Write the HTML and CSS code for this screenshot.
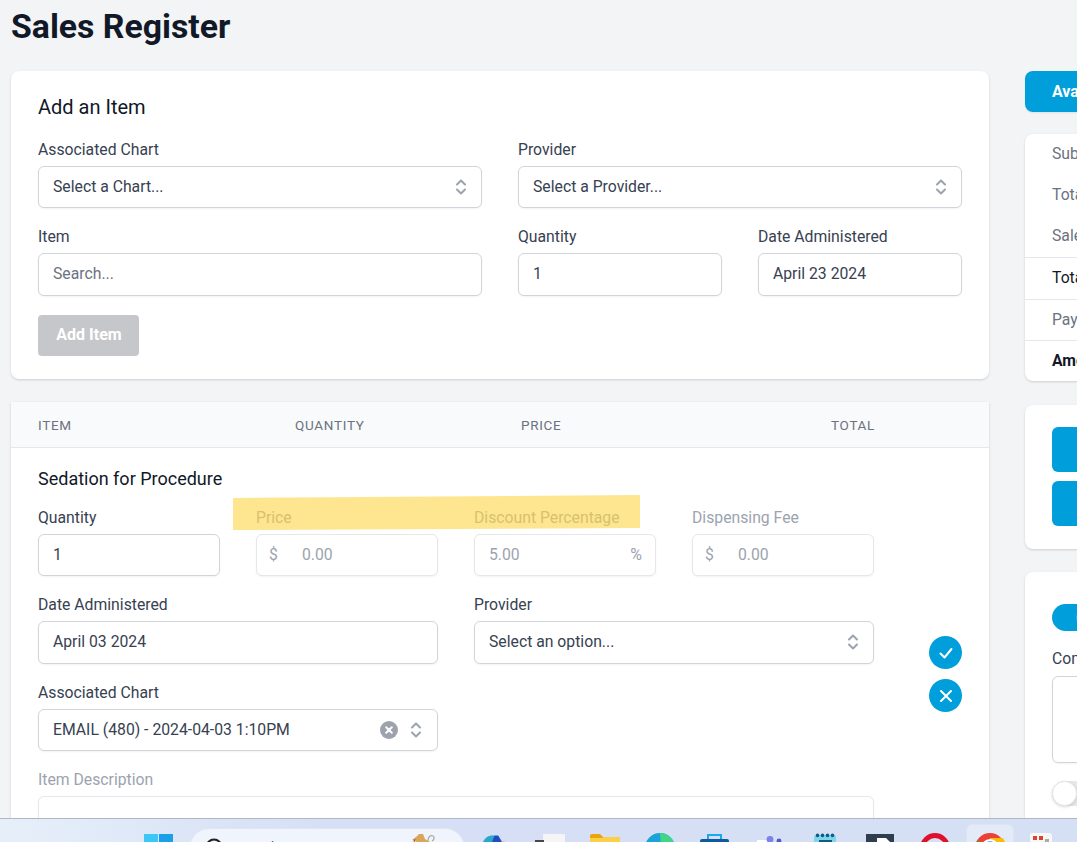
FILE: index.html
```html
<!DOCTYPE html>
<html lang="en">
<head>
<meta charset="utf-8">
<title>Sales Register</title>
<link rel="stylesheet" href="styles.css">
</head>
<body>
<div class="page">
  <h1 class="title">Sales Register</h1>
  <div class="columns">
    <main class="main">
      <section class="card add-card">
        <h2 class="heading">Add an Item</h2>
        <div class="form-grid">
          <div class="field half"><label class="label">Associated Chart</label>
            <div class="control"><span class="value">Select a Chart...</span><svg class="updown" viewBox="0 0 12 20"><path d="M2 7.5 6 3.5l4 4M2 12.5l4 4 4-4"/></svg></div></div>
          <div class="field half"><label class="label">Provider</label>
            <div class="control"><span class="value">Select a Provider...</span><svg class="updown" viewBox="0 0 12 20"><path d="M2 7.5 6 3.5l4 4M2 12.5l4 4 4-4"/></svg></div></div>
          <div class="field half"><label class="label">Item</label>
            <div class="control tall"><span class="placeholder">Search...</span></div></div>
          <div class="field"><label class="label">Quantity</label>
            <div class="control tall"><span class="value">1</span></div></div>
          <div class="field"><label class="label">Date Administered</label>
            <div class="control tall"><span class="value">April 23 2024</span></div></div>
        </div>
        <button class="add-btn">Add Item</button>
      </section>

      <section class="card table-card">
        <div class="thead">
          <span class="th th-item">ITEM</span>
          <span class="th th-qty">QUANTITY</span>
          <span class="th th-price">PRICE</span>
          <span class="th th-total">TOTAL</span>
        </div>
        <div class="edit-row">
          <div class="edit-form">
            <h3 class="subheading">Sedation for Procedure</h3>
            <div class="form-grid">
              <div class="field"><label class="label">Quantity</label>
                <div class="control"><span class="value">1</span></div></div>
              <div class="field disabled"><label class="label">Price</label>
                <div class="control addon"><span class="prefix">$</span><span class="dim">0.00</span></div></div>
              <div class="field disabled"><label class="label">Discount Percentage</label>
                <div class="control"><span class="dim">5.00</span><span class="suffix">%</span></div></div>
              <div class="field disabled"><label class="label">Dispensing Fee</label>
                <div class="control addon"><span class="prefix">$</span><span class="dim">0.00</span></div></div>
              <div class="field half"><label class="label">Date Administered</label>
                <div class="control tall"><span class="value">April 03 2024</span></div></div>
              <div class="field half"><label class="label">Provider</label>
                <div class="control tall"><span class="value">Select an option...</span><svg class="updown" viewBox="0 0 12 20"><path d="M2 7.5 6 3.5l4 4M2 12.5l4 4 4-4"/></svg></div></div>
              <div class="field half"><label class="label">Associated Chart</label>
                <div class="control"><span class="value">EMAIL (480) - 2024-04-03 1:10PM</span>
                  <svg class="clear" viewBox="0 0 18 18"><circle cx="9" cy="9" r="9"/><path d="M6.2 6.2l5.6 5.6M11.8 6.2l-5.6 5.6"/></svg>
                  <svg class="updown chart-updown" viewBox="0 0 12 20"><path d="M2 7.5 6 3.5l4 4M2 12.5l4 4 4-4"/></svg></div></div>
              <div class="field full disabled"><label class="label">Item Description</label>
                <div class="control area"></div></div>
            </div>
          </div>
          <div class="row-actions">
            <button class="round" aria-label="Save"><svg viewBox="0 0 20 20"><path d="M4.5 10.5 8.5 14.5 15.5 6"/></svg></button>
            <button class="round" aria-label="Cancel"><svg viewBox="0 0 20 20"><path d="M5 5l10 10M15 5 5 15"/></svg></button>
          </div>
        </div>
      </section>
    </main>

    <aside class="side">
      <button class="avail-btn">Available Credit</button>
      <section class="card summary">
        <div class="sum-group">
          <div class="sum-row muted">Subtotal</div>
          <div class="sum-row muted">Total Discount</div>
          <div class="sum-row muted">Sales Tax</div>
        </div>
        <div class="sum-line dark">Total</div>
        <div class="sum-line muted">Payments</div>
        <div class="sum-line strong">Amount Due</div>
      </section>
      <section class="card actions-card">
        <button class="action-btn">Take Payment</button>
        <button class="action-btn">Save Sale</button>
      </section>
      <section class="card comment-card">
        <button class="pill">Options</button>
        <label class="label comment-label">Comments</label>
        <div class="comment-box"></div>
        <div class="switch"><span class="knob"></span></div>
      </section>
    </aside>
  </div>
</div>

<div class="highlight"></div>

<footer class="taskbar">
  <svg class="tb win" viewBox="0 0 30 30"><rect x="0" y="0" width="14" height="14" fill="#3cc8f6"/><rect x="15" y="0" width="14" height="14" fill="#1c9fea"/></svg>
  <div class="searchbox">
    <svg class="tb-search" viewBox="0 0 16 16"><circle cx="8" cy="8" r="6"/></svg>
    <span class="search-text">Search</span>
    <svg class="tb-dog" viewBox="0 0 32 12"><path d="M0 6 4 3l3-3h4l2 5 5 3v4H5V8z" fill="#d8a75c"/><path d="M3 5l-1 3" stroke="#b5472f" fill="none"/><path d="M16 7c0-5 3-6 5-5s1 4-1 5M22 12c2-2 6-3 10-2" stroke="#a9a9a0" stroke-width="1.2" fill="none"/></svg>
  </div>
  <svg class="tb copilot" viewBox="0 0 30 30"><path d="M0 10C2 3 7 0 11 0h3l4 10z" fill="#2ea6c9"/><path d="M10 10 14 0h4l6 10z" fill="#1b4fc0"/><path d="M20 7h5l2 3h-7z" fill="#c065d6"/></svg>
  <svg class="tb box" viewBox="0 0 30 30"><rect x="8" y="0" width="22" height="30" fill="#f5f5f5"/><rect x="0" y="6" width="9" height="24" fill="#45474b"/></svg>
  <svg class="tb folder" viewBox="0 0 30 30"><path d="M0 2a2 2 0 0 1 2-2h8l3 3h17v27H0z" fill="#e8a60c"/><path d="M0 4h12l2-1h16v27H0z" fill="#fbcf4a"/></svg>
  <svg class="tb edge" viewBox="0 0 30 30"><circle cx="15" cy="15" r="15" fill="#1ba2d8"/><path d="M15 0a15 15 0 0 1 15 15H16z" fill="#3fd68a"/></svg>
  <svg class="tb bag" viewBox="0 0 30 30"><path d="M8 6V1h13v5" fill="none" stroke="#19aaec" stroke-width="2"/><rect y="5" width="29" height="25" rx="2" fill="#0f5a9e"/></svg>
  <svg class="tb teams" viewBox="0 0 30 30"><rect x="0" y="4" width="13" height="26" fill="#fff"/><circle cx="13" cy="3.4" r="3.4" fill="#7b83eb"/><circle cx="22" cy="5" r="2.4" fill="#5059c9"/></svg>
  <svg class="tb cal" viewBox="0 0 22 30"><rect y="2" width="22" height="28" rx="2" fill="#80d4ee"/><g fill="#0f5d80"><circle cx="3.5" cy="2.4" r="1.8"/><circle cx="8.5" cy="2.4" r="1.8"/><circle cx="13.5" cy="2.4" r="1.8"/><circle cx="18.5" cy="2.4" r="1.8"/><rect x="5" y="7" width="13" height="23"/></g></svg>
  <svg class="tb dark-app" viewBox="0 0 28 30"><rect width="28" height="30" fill="#2f3e4e"/><path d="M11 4h9l4 4v22H11z" fill="#fff"/></svg>
  <svg class="tb opera" viewBox="0 0 30 30"><circle cx="15" cy="15" r="12.5" fill="none" stroke="#e0102c" stroke-width="5"/></svg>
  <div class="chrome-tile">
    <svg class="chrome" viewBox="0 0 30 30"><circle cx="15" cy="15" r="15" fill="#ea4335"/><path d="M0 15A15 15 0 0 0 12 29.700L15 15 2 7.500z" fill="#34a853"/><path d="M15 5h12.500A15 15 0 0 1 15 30z" fill="#fbbc05"/><circle cx="15" cy="15" r="9" fill="#fff"/><circle cx="15" cy="15" r="6.800" fill="#4285f4"/></svg>
  </div>
  <svg class="tb sheet" viewBox="0 0 22 30"><rect width="22" height="30" rx="3" fill="#f7f7f7"/><g fill="#d9452b"><rect x="3" y="3" width="4" height="4"/><rect x="9" y="3" width="4" height="4"/><rect x="3" y="9" width="4" height="4"/></g><rect x="15" y="6" width="4" height="5" fill="#aaa"/></svg>
</footer>
</body>
</html>
```

FILE: styles.css
```css
* { box-sizing: border-box; }
html, body { margin: 0; height: 100%; overflow: hidden; }
body {
  background: #f3f4f6;
  font-family: Roboto, "Liberation Sans", sans-serif;
  font-size: 15.75px;
  color: #374151;
}
.page { padding-left: 11px; width: 1400px; height: 842px; overflow: hidden; }
.title {
  margin: 0;
  height: 71px;
  padding-top: 8px;
  font-size: 33.8px;
  line-height: 38px;
  font-weight: 700;
  color: #111827;
}
.columns { display: flex; gap: 36px; align-items: flex-start; }
.main { width: 978px; flex: none; display: flex; flex-direction: column; gap: 23px; }
.side { width: 340px; flex: none; display: flex; flex-direction: column; }
.card {
  background: #fff;
  border-radius: 8px;
  box-shadow: 0 1px 3px rgba(0,0,0,.1), 0 1px 2px rgba(0,0,0,.06);
}
.add-card { padding: 27px 27px 24px; height: 308px; }
.heading { margin: 0 0 25px; font-size: 20px; line-height: 18px; font-weight: 400; color: #111827; }
.form-grid { display: grid; grid-template-columns: repeat(4, 1fr); column-gap: 36px; row-gap: 20px; }
.field { min-width: 0; }
.half { grid-column: span 2; }
.full { grid-column: span 4; }
.label { display: block; height: 25px; line-height: 18px; font-size: 15.75px; color: #374151; }
.control {
  height: 42px;
  display: flex;
  align-items: center;
  padding: 0 14px;
  background: #fff;
  border: 1px solid #d1d5db;
  border-radius: 6px;
  box-shadow: 0 1px 2px rgba(0,0,0,.05);
  line-height: 20px;
  color: #374151;
}
.tall { height: 43px; padding-bottom: 2px; }
.addon { padding-left: 12px; }
.value { flex: 1; white-space: nowrap; color: #374151; }
.placeholder { color: #6b7280; }
.updown { width: 12px; height: 20px; flex: none; }
.updown path { fill: none; stroke: #9ca3af; stroke-width: 2; stroke-linecap: round; stroke-linejoin: round; }
.clear { width: 18px; height: 18px; flex: none; margin-right: 10px; }
.clear circle { fill: #9ca3af; }
.clear path { stroke: #fff; stroke-width: 2; stroke-linecap: round; }
.chart-updown { margin-left: 2px; margin-right: 1px; }
.add-btn {
  display: block;
  margin-top: 19px;
  width: 101px;
  height: 41px;
  border: 0;
  border-radius: 4px;
  background: #c6c7ca;
  color: #fff;
  font: 700 16px Roboto, sans-serif;
  padding: 0 0 2px 1px;
}
.table-card { border-radius: 0; height: 600px; }
.thead { height: 46px; background: #f9fafb; border-bottom: 1px solid #e5e7eb; display: grid; grid-template-columns: 257px 226px 310px 1fr; align-items: center; padding-left: 27px; }
.th { font-size: 13.5px; letter-spacing: .7px; color: #6b7280; line-height: 46px; }
.edit-row { display: flex; padding: 22px 27px 0; }
.edit-form { width: 836px; flex: none; }
.subheading { margin: 0 0 21px; font-size: 18px; line-height: 18px; font-weight: 400; color: #111827; }
.disabled .label { color: #9ca3af; }
.disabled .control { border-color: #e5e7eb; }
.prefix { width: 33px; color: #9ca3af; flex: none; }
.dim { flex: 1; color: #9ca3af; }
.suffix { color: #9ca3af; font-size: 16px; margin-right: -1px; }
.area { height: 100px; }
.row-actions { margin-left: 55px; padding-top: 166px; display: flex; flex-direction: column; gap: 10px; }
.round {
  width: 33px;
  height: 33px;
  padding: 0;
  border: 0;
  border-radius: 50%;
  background: #009fdb;
  display: flex;
  align-items: center;
  justify-content: center;
}
.round svg { width: 20px; height: 20px; }
.round path { fill: none; stroke: #fff; stroke-width: 2; stroke-linecap: round; stroke-linejoin: round; }
.avail-btn {
  height: 41px;
  border: 0;
  border-radius: 8px;
  background: #009fdb;
  color: #fff;
  font: 700 16px Roboto, sans-serif;
  text-align: left;
  padding: 0 0 0 27px;
  margin-bottom: 22px;
  box-shadow: 0 1px 2px rgba(0,0,0,.08);
}
.summary { height: 247px; margin-bottom: 24px; }
.sum-group { height: 123px; padding-top: 9px; }
.sum-row { height: 41px; line-height: 22px; padding-left: 27px; }
.sum-line { height: 41.5px; line-height: 39px; padding-left: 27px; border-top: 1px solid #e5e7eb; }
.muted { color: #6b7280; }
.dark { color: #111827; }
.strong { color: #111827; font-weight: 700; }
.actions-card { height: 144px; padding: 22px 27px; display: flex; flex-direction: column; gap: 9px; margin-bottom: 23px; }
.action-btn { height: 45px; border: 0; border-radius: 6px; background: #009fdb; color: #fff; font: 700 16px Roboto, sans-serif; }
.comment-card { height: 300px; padding: 32px 27px 0; }
.pill { display: block; width: 120px; height: 27px; border: 0; border-radius: 14px; background: #009fdb; color: #fff; font: 400 14px Roboto, sans-serif; text-align: left; padding: 0 0 0 24px; }
.comment-label { margin-top: 19px; height: 26px; }
.comment-box { height: 87px; border: 1px solid #d1d5db; border-radius: 6px; box-shadow: 0 1px 2px rgba(0,0,0,.05); }
.switch { margin-top: 18px; width: 55px; height: 25px; border-radius: 13px; background: #e5e7eb; }
.knob { display: block; width: 25px; height: 25px; border-radius: 50%; background: #fff; border: 1px solid #e5e7eb; box-shadow: 0 1px 3px rgba(0,0,0,.15); }
.highlight {
  position: absolute;
  left: 233px;
  top: 495px;
  width: 407px;
  height: 35px;
  background: rgba(252, 213, 68, .6);
  clip-path: polygon(0 3px, 100% 0, 100% 33px, 0 100%);
}
.taskbar {
  position: absolute;
  left: 0;
  right: 0;
  bottom: 0;
  height: 24px;
  overflow: hidden;
  border-top: 1px solid #b1b6c6;
  background: linear-gradient(90deg, #e6eff9 0%, #d6dff5 30%, #d6e0f5 100%);
}
.taskbar > * { position: absolute; }
.tb { width: 30px; height: 30px; top: 15px; }
.win { left: 144px; }
.searchbox { left: 189px; top: 9px; width: 276px; height: 40px; border-radius: 20px; background: #eff4fd; border: 1px solid #dfe5f3; }
.tb-search { position: absolute; left: 14px; top: 8px; width: 20px; height: 20px; }
.tb-search circle { fill: none; stroke: #222; stroke-width: 1.6; }
.search-text { position: absolute; left: 45px; top: 8px; font-size: 14px; color: #444; font-family: "Open Sans", sans-serif; }
.tb-dog { position: absolute; left: 222px; top: 5px; width: 32px; height: 12px; }
.copilot { left: 482px; width: 27px; top: 15px; }
.box { left: 535px; top: 15px; }
.folder { left: 590px; top: 15px; }
.edge { left: 645px; top: 14px; }
.bag { left: 700px; top: 15px; }
.teams { left: 757px; top: 17px; }
.cal { left: 814px; width: 22px; top: 14px; }
.dark-app { left: 866px; width: 28px; top: 15px; }
.opera { left: 920px; top: 14px; }
.chrome-tile { left: 966px; top: 5px; width: 48px; height: 40px; border-radius: 6px; background: #e4ebf8; border: 1px solid #dde4f4; }
.chrome { position: absolute; left: 8px; top: 8px; width: 30px; height: 30px; }
.sheet { left: 1030px; width: 22px; top: 14px; }
```
